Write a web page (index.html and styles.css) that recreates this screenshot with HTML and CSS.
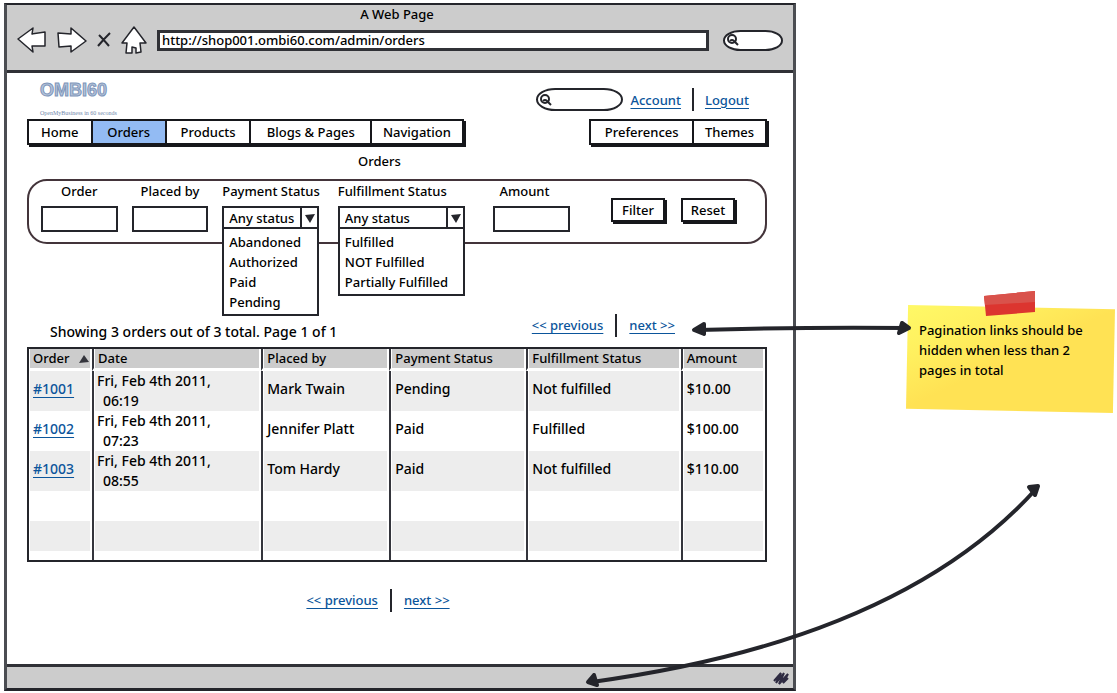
FILE: index.html
```
<!DOCTYPE html>
<html lang="en">
<head>
<meta charset="utf-8">
<title>Orders</title>
<link rel="stylesheet" href="styles.css">
</head>
<body>
<div class="board">
  <div class="window">
    <header class="chrome">
      <div class="chrome-title">A Web Page</div>
      <div class="toolbar">
        <button class="icon-button" aria-label="Back"><svg width="30" height="26" viewBox="0 0 30 26"><path d="M1 12 16 1 15 7 28 5 28 19 15 19 16 25Z"/></svg></button>
        <button class="icon-button" aria-label="Forward"><svg width="30" height="26" viewBox="0 0 30 26"><path d="M29 14 14 1 14 7 1 6 2 20 14 19 14 25Z"/></svg></button>
        <button class="icon-button stop" aria-label="Stop"><svg width="14" height="16" viewBox="0 0 14 16"><path d="M2 3Q6 7 12 14M13 1Q6 8 1 14"/></svg></button>
        <button class="icon-button" aria-label="Home page"><svg width="26" height="28" viewBox="0 0 26 28"><path d="M13 1 25 17 19 17 20 26 15 27 15 22 11 21 11 27 5 27 6 17 1 17Z"/></svg></button>
        <input class="address" type="text" aria-label="Address" value="http://shop001.ombi60.com/admin/orders">
        <label class="search search-small"><svg width="12" height="12" viewBox="0 0 12 12"><ellipse cx="5" cy="5" rx="4" ry="4"/><path d="M3 7Q5 5 7 7L11 11"/></svg><input type="search" aria-label="Web search"></label>
      </div>
    </header>

    <main class="page">
      <div class="top">
        <div class="brand">
          <div class="logo">OMBI60</div>
          <div class="tagline">OpenMyBusiness in 60 seconds</div>
        </div>
        <div class="account">
          <label class="search"><svg width="12" height="12" viewBox="0 0 12 12"><ellipse cx="5" cy="5" rx="4" ry="4"/><path d="M3 7Q5 5 7 7L11 11"/></svg><input type="search" aria-label="Search shop"></label>
          <a href="#account">Account</a>
          <span class="bar"></span>
          <a href="#logout">Logout</a>
        </div>
      </div>

      <div class="menus">
        <nav class="tabs tabs-main">
          <button>Home</button><button class="current">Orders</button><button>Products</button><button>Blogs &amp; Pages</button><button>Navigation</button>
        </nav>
        <nav class="tabs tabs-side">
          <button>Preferences</button><button>Themes</button>
        </nav>
      </div>

      <h1>Orders</h1>

      <form class="filters">
        <div class="field"><label for="order">Order</label><input id="order" type="text"></div>
        <div class="field"><label for="placed">Placed by</label><input id="placed" type="text"></div>
        <div class="field combo">
          <label for="payment">Payment Status</label>
          <div class="drop">
            <select id="payment"><option>Any status</option></select>
            <svg class="caret" width="10" height="9" viewBox="0 0 10 9"><path d="M0 1 10 0 5 9Z"/></svg>
            <ul><li>Abandoned</li><li>Authorized</li><li>Paid</li><li>Pending</li></ul>
          </div>
        </div>
        <div class="field combo fulfillment">
          <label for="fulfillment">Fulfillment Status</label>
          <div class="drop">
            <select id="fulfillment"><option>Any status</option></select>
            <svg class="caret" width="10" height="9" viewBox="0 0 10 9"><path d="M0 1 10 0 5 9Z"/></svg>
            <ul><li>Fulfilled</li><li>NOT Fulfilled</li><li>Partially Fulfilled</li></ul>
          </div>
        </div>
        <div class="field amount"><label for="amount">Amount</label><input id="amount" type="text"></div>
        <div class="actions">
          <button type="button">Filter</button>
          <button type="reset">Reset</button>
        </div>
      </form>

      <div class="summary">
        <p>Showing 3 orders out of 3 total. Page 1 of 1</p>
        <div class="pager"><a href="#previous">&lt;&lt; previous</a><span class="bar"></span><a href="#next">next &gt;&gt;</a></div>
      </div>

      <table class="orders">
        <colgroup><col class="c-order"><col class="c-date"><col class="c-by"><col class="c-pay"><col class="c-ful"><col class="c-amt"></colgroup>
        <thead>
          <tr><th><span class="sorted">Order <svg width="10" height="8" viewBox="0 0 10 8"><path d="M5 0 10 7 0 8Z"/></svg></span></th><th>Date</th><th>Placed by</th><th>Payment Status</th><th>Fulfillment Status</th><th>Amount</th></tr>
        </thead>
        <tbody>
          <tr><td><a href="#1001">#1001</a></td><td class="date">Fri, Feb 4th 2011, <span class="time">06:19</span></td><td>Mark Twain</td><td>Pending</td><td>Not fulfilled</td><td>$10.00</td></tr>
          <tr><td><a href="#1002">#1002</a></td><td class="date">Fri, Feb 4th 2011, <span class="time">07:23</span></td><td>Jennifer Platt</td><td>Paid</td><td>Fulfilled</td><td>$100.00</td></tr>
          <tr><td><a href="#1003">#1003</a></td><td class="date">Fri, Feb 4th 2011, <span class="time">08:55</span></td><td>Tom Hardy</td><td>Paid</td><td>Not fulfilled</td><td>$110.00</td></tr>
          <tr class="blank"><td></td><td></td><td></td><td></td><td></td><td></td></tr>
          <tr class="blank"><td></td><td></td><td></td><td></td><td></td><td></td></tr>
          <tr class="tail"><td></td><td></td><td></td><td></td><td></td><td></td></tr>
        </tbody>
      </table>

      <div class="pager pager-bottom"><a href="#previous">&lt;&lt; previous</a><span class="bar"></span><a href="#next">next &gt;&gt;</a></div>
    </main>

    <footer class="status">
      <svg width="18" height="16" viewBox="0 0 18 16"><path d="M2 11 9 3 4 13 12 3 7 14 16 4 11 13 16 8"/></svg>
    </footer>
  </div>

  <aside class="notes">
    <div class="sticky">
      <svg class="tape" width="52" height="27" viewBox="0 0 52 27"><path fill="#dc352f" d="M0 6 51 1 51 22 2 26Z"/><path fill="#d9524b" d="M0 6 51 1 51 12 1 15Z"/></svg>
      <p>Pagination links should be hidden when less than 2 pages in total</p>
    </div>
  </aside>

  <svg class="arrows" viewBox="0 0 1117 693" preserveAspectRatio="none" aria-hidden="true">
    <path class="shaft" d="M698 330Q800 327 906 328"/>
    <path class="head" d="M704 324 694 330 704 334Z"/>
    <path class="head" d="M902 323 909 328 899 333Z"/>
    <path class="shaft" d="M592 682Q900 640 1036 489"/>
    <path class="head" d="M594 675 588 682 597 685Z"/>
    <path class="head" d="M1029 487 1038 486 1035 495Z"/>
  </svg>
</div>
</body>
</html>
```
FILE: styles.css
```
* { box-sizing: border-box; }

body {
  margin: 0;
  background: #fff;
  color: #000;
  font: 500 13px/20px "Noto Sans", sans-serif;
}

button, input, select { font: inherit; color: inherit; margin: 0; }
a { color: #0b559b; text-underline-offset: 3px; }
h1, p, ul { margin: 0; padding: 0; font-size: inherit; font-weight: inherit; }

.board {
  position: relative;
  display: grid;
  grid-template-columns: 796fr 321fr;
  min-height: 100vh;
}

.window {
  display: flex;
  flex-direction: column;
  margin: 3px 0 2px 4px;
  border: 3px solid #4b4d52;
  border-top: 2px solid #24252b;
  border-bottom-color: #24252b;
}

/* Browser chrome */
.chrome {
  background: #ccc;
  border-bottom: 3px solid #303136;
  padding-bottom: 13px;
}
.chrome-title { padding-right: 6px; text-align: center; line-height: 18px; }
.toolbar {
  display: flex;
  align-items: center;
  gap: 10px;
  padding: 0 10px;
  height: 34px;
}
.icon-button { display: flex; padding: 0; border: 0; background: none; }
.icon-button path { fill: #fff; stroke: #24252b; stroke-width: 1.5; stroke-linejoin: round; }
.icon-button.stop path { fill: none; stroke-width: 2; }
.address {
  flex: 1;
  min-width: 0;
  height: 21px;
  padding: 0 2px;
  border: 3px solid #303136;
  background: #fff;
}
.search {
  display: flex;
  align-items: center;
  width: 87px;
  height: 23px;
  padding: 0 2px;
  border: 2px solid #24252b;
  border-radius: 20px / 12px;
  background: #fff;
}
.search svg { flex: none; fill: none; stroke: #24252b; stroke-width: 2; }
.search input { flex: 1; min-width: 0; height: 16px; padding: 0; border: 0; outline: 0; background: none; }
.search-small { width: 60px; height: 21px; margin-left: 4px; }

/* Page header */
.page { flex: 1; padding: 0 26px 0 20px; }
.top { display: flex; justify-content: space-between; height: 46px; padding: 0 18px 0 13px; }
.logo {
  color: #b4c3d9;
  font: bold 18px/34px "Liberation Sans", sans-serif;
  -webkit-text-stroke: 1px #7f96ba;
  height: 35px;
}
.tagline { color: #7289ad; font: 6px/10px "Liberation Serif", serif; white-space: nowrap; }
.account { display: flex; align-items: center; align-self: flex-start; gap: 11px; padding-top: 15px; }
.account .search { margin-right: -4px; }
.bar { width: 2px; height: 23px; background: #24252b; }

.menus { display: flex; justify-content: space-between; }
.tabs {
  display: grid;
  height: 26px;
  border: 2px solid #16171b;
  box-shadow: 2px 2px 0 #16171b;
}
.tabs-main { width: 59%; grid-template-columns: 62fr 75fr 85fr 122fr 92fr; }
.tabs-side { width: 24%; grid-template-columns: 102fr 74fr; }
.tabs button { padding: 0; border: 0; border-left: 2px solid #16171b; background: #fff; white-space: nowrap; }
.tabs button:first-child { border-left: 0; }
.tabs .current { background: #93bbf3; }

h1 { padding: 6px 35px 8px 0; text-align: center; }

/* Filters */
.filters {
  display: grid;
  grid-template-columns: 77fr 77fr 97fr 133fr 91fr 152fr;
  column-gap: 14px;
  height: 65px;
  padding: 0 30px 0 12px;
  border: 2px solid #43343a;
  border-radius: 20px;
}
.field { min-width: 0; }
.fulfillment { padding-left: 5px; }
.amount { padding-left: 14px; }
.field label { display: block; text-align: center; line-height: 20px; padding-bottom: 5px; white-space: nowrap; }
.amount label { padding-right: 14px; }
.combo label { text-align: left; }
.field input {
  display: block;
  width: 100%;
  height: 26px;
  padding: 0 6px;
  border: 2px solid #24252b;
  background: #fff;
}
.drop { position: relative; }
.drop select {
  display: block;
  width: 100%;
  height: 23px;
  padding: 0 18px 0 5px;
  border: 2px solid #24252b;
  border-radius: 0;
  background: linear-gradient(#24252b, #24252b) right 15px top / 2px 100% no-repeat #fff;
  appearance: none;
}
.caret { position: absolute; top: 8px; right: 4px; fill: #24252b; pointer-events: none; }
.drop ul {
  position: absolute;
  top: 23px;
  left: 0;
  right: 0;
  z-index: 1;
  padding: 3px 5px 2px;
  border: 2px solid #24252b;
  border-top: 0;
  background: #fff;
  list-style: none;
  white-space: nowrap;
}
.actions { display: flex; justify-content: flex-end; gap: 16px; padding-top: 17px; }
.actions button {
  width: 54px;
  height: 24px;
  padding: 0;
  border: 2px solid #16171b;
  background: #fff;
  box-shadow: 2px 2px 0 #16171b;
}

/* Pagination */
.summary { display: flex; justify-content: space-between; margin-top: 69px; padding: 0 92px 0 23px; }
.summary p { padding-top: 9px; font-size: 14px; }
.pager { display: flex; align-items: center; gap: 12px; height: 24px; }
.summary .pager { margin-bottom: 10px; }
.pager-bottom { justify-content: center; margin-top: 26px; padding-right: 38px; }

/* Orders table */
.orders {
  width: 100%;
  table-layout: fixed;
  border-collapse: separate;
  border-spacing: 0;
  border: 2px solid #24252b;
}
.c-order { width: 63px; }
.c-date { width: 23%; }
.c-by { width: 128px; }
.c-pay { width: 137px; }
.c-ful { width: 21%; }
.orders th, .orders td {
  padding: 0 4px;
  border-left: 2px solid #34353c;
  box-shadow: inset 1px 0 #fff, inset -2px 0 #fff;
  text-align: left;
  font-weight: inherit;
}
.orders th:first-child, .orders td:first-child { border-left: 0; }
.orders th { height: 22px; line-height: 19px; padding-right: 3px; background: #ccc; border-bottom: 3px solid #fff; }
.orders td { height: 40px; padding-bottom: 4px; font-size: 14px; }
.orders .date { padding: 0 3px; }
.orders tbody tr:nth-child(odd) { background: #ededed; }
.orders .blank td { height: 30px; }
.orders .tail td { height: 9px; }
.orders .tail { background: #fff; }
.sorted { display: flex; align-items: center; justify-content: space-between; }
.sorted svg { fill: #34353c; }
.time { display: block; padding-left: 6px; }

.status {
  display: flex;
  align-items: center;
  justify-content: flex-end;
  height: 24px;
  padding-right: 3px;
  border-top: 3px solid #303136;
  background: #ccc;
}
.status path { fill: none; stroke: #2e2b42; stroke-width: 2; }

/* Annotations */
.notes { padding: 305px 2px 0 110px; }
.sticky { position: relative; }
.sticky p {
  min-height: 108px;
  padding: 15px 20px 0 13px;
  background: linear-gradient(155deg, #fff967 0%, #fff05f 25%, #ffe254 50%, #ffe254 100%);
  clip-path: polygon(1% 0, 100% 4%, 99% 100%, 0 96%);
}
.tape { position: absolute; left: 78px; top: -15px; z-index: 1; }
.arrows { position: absolute; inset: 0; width: 100%; height: 100%; pointer-events: none; z-index: 2; }
.shaft { fill: none; stroke: #24252b; stroke-width: 4; stroke-linecap: round; stroke-linejoin: round; }
.head { fill: #24252b; stroke: #24252b; stroke-width: 4; stroke-linejoin: round; }
```
